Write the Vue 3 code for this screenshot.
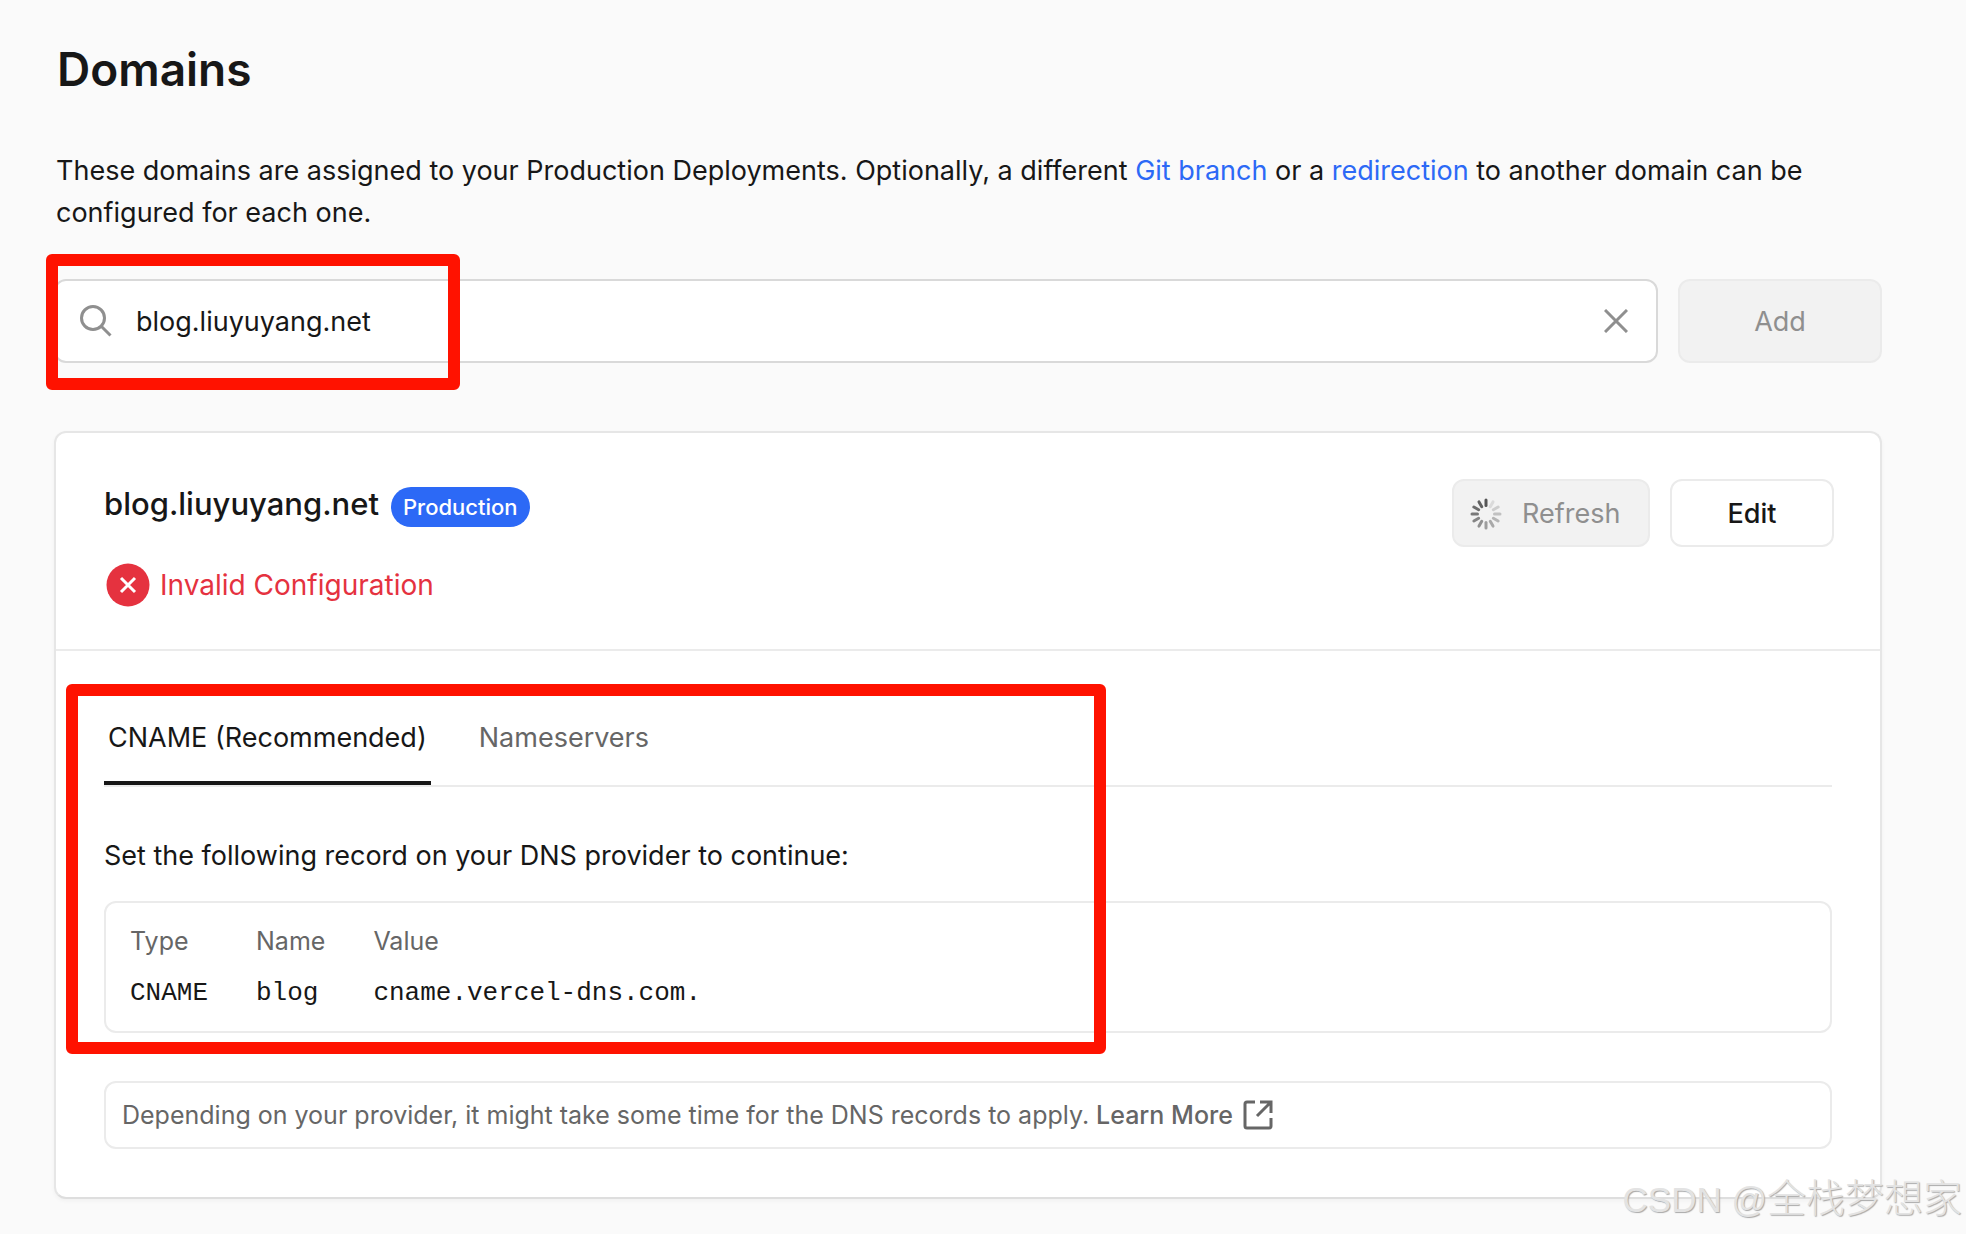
<script setup>
import { ref } from 'vue'

const domain = ref('blog.liuyuyang.net')
const records = [{ type: 'CNAME', name: 'blog', value: 'cname.vercel-dns.com.' }]
const spokes = Array.from({ length: 12 }, (_, i) => ({
  angle: (i + 1) * 30,
  opacity: 0.15 + i * 0.077,
}))
</script>

<template>
  <main class="page">
    <h1 class="title">Domains</h1>
    <p class="intro">
      These domains are assigned to your Production Deployments. Optionally, a different
      <a href="#">Git branch</a> or a <a href="#">redirection</a> to another domain can be configured for each one.
    </p>

    <form class="search-row" @submit.prevent>
      <div class="search">
        <svg class="search-icon" viewBox="0 0 32 32" aria-hidden="true">
          <circle cx="13" cy="13" r="11.5" />
          <path d="M21.5 21.5 L30.5 30.5" />
        </svg>
        <input v-model="domain" class="search-input" type="text" aria-label="Domain" />
        <button class="clear" type="button" aria-label="Clear" @click="domain = ''">
          <svg viewBox="0 0 24 24" aria-hidden="true"><path d="M1 1 L23 23 M23 1 L1 23" /></svg>
        </button>
      </div>
      <button class="btn add" type="submit" disabled>Add</button>
      <span class="mark mark-search"></span>
    </form>

    <section class="card">
      <header class="card-head">
        <div class="summary">
          <div class="name-row">
            <h2 class="name">blog.liuyuyang.net</h2>
            <span class="badge">Production</span>
          </div>
          <div class="status">
            <svg class="status-icon" viewBox="0 0 44 44" aria-hidden="true">
              <circle cx="22" cy="22" r="21.5" />
              <path d="M15 15 L29 29 M29 15 L15 29" />
            </svg>
            <span>Invalid Configuration</span>
          </div>
        </div>
        <div class="actions">
          <button class="btn refresh" type="button" disabled>
            <svg class="spinner" viewBox="-16 -16 32 32" aria-hidden="true">
              <line
                v-for="s in spokes"
                :key="s.angle"
                x1="0"
                y1="-8.5"
                x2="0"
                y2="-14"
                :opacity="s.opacity"
                :transform="`rotate(${s.angle})`"
              />
            </svg>
            Refresh
          </button>
          <button class="btn edit" type="button">Edit</button>
        </div>
      </header>

      <div class="card-body">
        <div class="tabs" role="tablist">
          <button class="tab active" type="button" role="tab" aria-selected="true">CNAME (Recommended)</button>
          <button class="tab" type="button" role="tab" aria-selected="false">Nameservers</button>
        </div>
        <p class="hint">Set the following record on your DNS provider to continue:</p>
        <div class="record-box">
          <table class="records">
            <thead>
              <tr><th>Type</th><th>Name</th><th>Value</th></tr>
            </thead>
            <tbody>
              <tr v-for="r in records" :key="r.name">
                <td>{{ r.type }}</td><td>{{ r.name }}</td><td>{{ r.value }}</td>
              </tr>
            </tbody>
          </table>
        </div>
        <p class="note">
          <span>Depending on your provider, it might take some time for the DNS records to apply.
            <a href="#" class="learn">Learn More</a></span>
          <svg class="external" viewBox="0 0 30 30" aria-hidden="true">
            <path d="M12 2 H4 Q2 2 2 4 V26 Q2 28 4 28 H26 Q28 28 28 26 V18" />
            <path d="M17 2 H28 V13 M28 2 L14 16" />
          </svg>
        </p>
        <span class="mark mark-records"></span>
      </div>
    </section>

    <div class="watermark">CSDN @<span class="author">全栈梦想家</span></div>
  </main>
</template>

<style>
body {
  background: #fafafa;
}
</style>

<style scoped>
.page {
  position: relative;
  box-sizing: border-box;
  min-height: 100vh;
  padding: 39px 84px 35px 54px;
  font-family: Inter, "Liberation Sans", sans-serif;
  font-size: 27px;
  line-height: 42px;
  color: #171717;
}
.page * {
  box-sizing: border-box;
}
.page h1,
.page h2,
.page p {
  margin: 0;
}
button,
input {
  font: inherit;
  color: inherit;
}
a {
  color: #2c69f6;
  text-decoration: none;
}
.page .title {
  margin: 0 0 51px 3px;
  font-size: 46px;
  font-weight: 600;
  line-height: 60px;
}
.page .intro {
  padding: 0 2px;
}
.search-row {
  position: relative;
  display: flex;
  gap: 20px;
  margin: 45px 0 68px;
}
.search {
  flex: 1;
  display: flex;
  align-items: center;
  height: 84px;
  padding: 0 28px 0 24px;
  background: #fff;
  border: 2px solid #d9d9d9;
  border-radius: 12px;
}
.search svg {
  display: block;
  fill: none;
  stroke: #8f8f8f;
  stroke-width: 3;
}
.search-icon {
  width: 32px;
  height: 32px;
}
.search-input {
  flex: 1;
  min-width: 0;
  margin-left: 24px;
  padding: 2px 0 0;
  border: 0;
  outline: 0;
  background: none;
}
.clear {
  padding: 0;
  border: 0;
  background: none;
}
.clear svg {
  width: 24px;
  height: 24px;
}
.btn {
  display: flex;
  align-items: center;
  justify-content: center;
  padding: 2px 0 0;
  border: 2px solid #ebebeb;
  border-radius: 12px;
  background: #fff;
  font-weight: 500;
}
.btn:disabled {
  background: #f2f2f2;
  color: #8f8f8f;
}
.add {
  width: 204px;
}
.card {
  background: #fff;
  border: 2px solid #e6e6e6;
  border-bottom-color: #dedede;
  border-radius: 12px;
  box-shadow: 0 2px 4px rgba(0, 0, 0, 0.04);
}
.card-head {
  display: flex;
  justify-content: space-between;
  padding: 46px 46px 42px 48px;
  border-bottom: 2px solid #ebebeb;
}
.name-row {
  display: flex;
  align-items: baseline;
  gap: 12px;
  height: 56px;
  padding-top: 4px;
}
.name {
  font-size: 31px;
  font-weight: 500;
}
.badge {
  height: 40px;
  padding: 0 12px;
  border-radius: 20px;
  background: #2c69f6;
  color: #fff;
  font-size: 22px;
  font-weight: 500;
  line-height: 40px;
}
.status {
  display: flex;
  align-items: center;
  gap: 10px;
  margin: 28px 0 0 2px;
  height: 44px;
  color: #e5323f;
  font-size: 28px;
}
.status-icon {
  width: 44px;
  height: 44px;
  fill: #e5323f;
}
.status-icon path {
  stroke: #fff;
  stroke-width: 3;
}
.actions {
  display: flex;
  gap: 20px;
}
.actions .btn {
  height: 68px;
}
.refresh {
  justify-content: flex-start;
  width: 198px;
  gap: 20px;
  padding-left: 16px;
}
.btn.add,
.btn.refresh {
  font-weight: 400;
}
.edit {
  width: 164px;
}
.spinner {
  width: 32px;
  height: 32px;
  stroke: #555;
  stroke-width: 3;
  stroke-linecap: round;
}
.card-body {
  position: relative;
  padding: 48px;
}
.tabs {
  display: flex;
  gap: 44px;
  border-bottom: 2px solid #ebebeb;
}
.tab {
  height: 86px;
  padding: 0 4px 4px;
  border: 0;
  border-bottom: 4px solid transparent;
  background: none;
  color: #666;
}
.tab.active {
  border-bottom-color: #171717;
  color: #171717;
}
.page .hint {
  margin: 48px 0 24px;
}
.record-box,
.page .note {
  border: 2px solid #ebebeb;
  border-radius: 12px;
}
.record-box {
  padding: 14px 24px 10px;
}
.records {
  border-collapse: collapse;
  font-size: 25px;
}
.records th,
.records td {
  padding: 0 48px 0 0;
  text-align: left;
  vertical-align: middle;
}
.records th {
  height: 48px;
  color: #666;
  font-weight: 400;
}
.records td {
  height: 56px;
  font-family: "Liberation Mono", monospace;
  font-size: 26px;
}
.page .note {
  display: flex;
  align-items: center;
  gap: 10px;
  height: 68px;
  margin-top: 48px;
  padding: 0 16px;
  color: #666;
  font-size: 25px;
}
.learn {
  color: #666;
  font-weight: 500;
}
.external {
  width: 30px;
  height: 30px;
  fill: none;
  stroke: #666;
  stroke-width: 3;
}
.mark {
  position: absolute;
  border: 12px solid #ff1200;
  border-radius: 6px;
  pointer-events: none;
}
.mark-search {
  top: -25px;
  bottom: -27px;
  left: -8px;
  width: 414px;
}
.mark-records {
  top: 33px;
  left: 10px;
  width: 1040px;
  height: 370px;
}
.watermark {
  position: absolute;
  right: 4px;
  bottom: 8px;
  color: #e3e3e3;
  font-family: "Liberation Sans", "Noto Sans CJK SC", sans-serif;
  font-size: 35px;
  font-weight: 300;
  line-height: 52px;
  text-shadow: 1px 1px 1px #a8a8a8;
}
.author {
  font-size: 39px;
}
</style>
